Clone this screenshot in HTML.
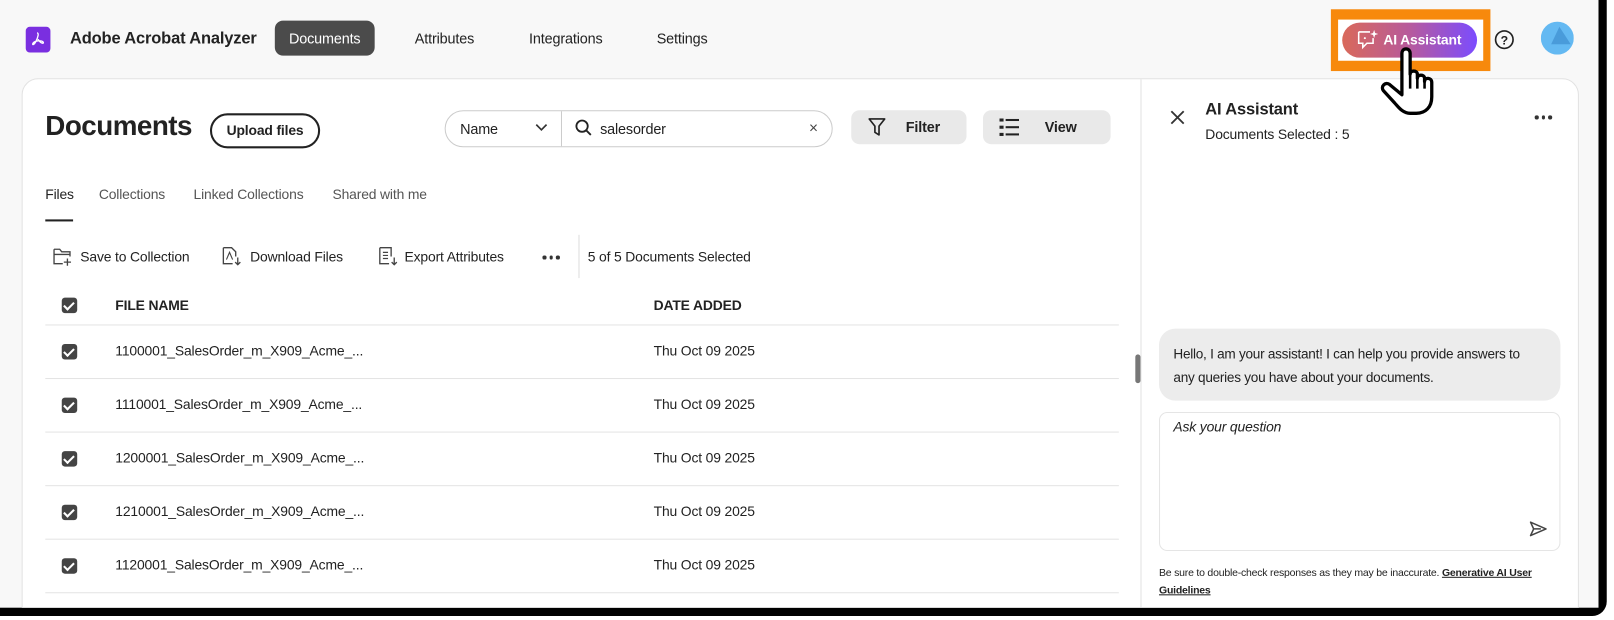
<!DOCTYPE html>
<html><head><meta charset="utf-8"><style>
*{margin:0;padding:0;box-sizing:border-box}
html,body{width:1614px;height:620px;overflow:hidden;background:#fff;font-family:"Liberation Sans",sans-serif;color:#222}
#wrap{position:absolute;left:0;top:0;width:1568px;height:602px;transform:scale(1.0293,1.03);transform-origin:0 0;letter-spacing:-0.15px}
.a{position:absolute;white-space:nowrap}
.frame{position:absolute;left:0;top:0;width:1561px;height:598px;background:#000;border-radius:0 0 14px 0}
.bg{position:absolute;left:0;top:0;width:1553px;height:590px;background:#f8f8f8;overflow:hidden}
.card{position:absolute;left:21px;top:76px;width:1513px;height:540px;background:#fff;border:1.5px solid #e2e2e2;border-radius:16px}
.nav{font-size:14px;color:#222}
.row{position:absolute;left:44px;width:1043px;height:1px;background:#e4e4e4}
.cb{position:absolute;left:60px;width:15px;height:15px;background:#444;border-radius:3px}
.cb:after{content:"";position:absolute;left:4px;top:2px;width:4px;height:8px;border:solid #fff;border-width:0 2px 2px 0;transform:rotate(45deg)}
.fn{font-size:13.5px;left:112px}
.dt{font-size:13.5px;left:635px}
.dots{position:absolute;display:flex;gap:3px}
.dots i{width:3.5px;height:3.5px;border-radius:50%;background:#333;display:block}
</style></head><body><div id="wrap">
<div class="frame"></div>
<div class="bg">
<div class="a" style="left:25px;top:26px;width:24px;height:25px;background:#7a2fe0;border-radius:4px"></div>
<svg class="a" style="left:29px;top:30px" width="16" height="17" viewBox="0 0 16 17"><path d="M7 2 C9 2 8 6 6 10 C4 14 2 14 3 12 C5 9 12 9 13 11 C14 13 10 12 8 8" stroke="#fff" stroke-width="1.3" fill="none"/></svg>
<div class="a" style="left:68px;top:29px;font-size:16px;font-weight:bold;color:#222">Adobe Acrobat Analyzer</div>
<div class="a" style="left:267px;top:20px;width:97px;height:34px;background:#4b4b4b;border-radius:8px;color:#fff;font-size:14px;line-height:34px;text-align:center">Documents</div>
<div class="a nav" style="left:403px;top:29px">Attributes</div>
<div class="a nav" style="left:514px;top:29px">Integrations</div>
<div class="a nav" style="left:638px;top:29px">Settings</div>
<div class="a" style="left:1293px;top:9px;width:155px;height:60px;background:#f7890c"></div>
<div class="a" style="left:1300px;top:19px;width:141px;height:40px;background:#fff"></div>
<div class="a" style="left:1304px;top:22px;width:131px;height:34px;border-radius:17px;background:linear-gradient(90deg,#d9695a,#b75a9c,#7b4cff);color:#fff;font-size:13.5px;font-weight:bold;line-height:34px;padding-left:40px">AI Assistant</div>
<svg class="a" style="left:1318px;top:28px" width="22" height="20" viewBox="0 0 22 20"><path d="M2 3 H13 M2 3 V14 H6 V18 L10 14 H16 V9" stroke="#fff" stroke-width="1.5" fill="none"/><path d="M17 1 L18 4 L21 5 L18 6 L17 9 L16 6 L13 5 L16 4Z" fill="#fff"/><circle cx="8" cy="9" r="1" fill="#fff"/></svg>
<svg class="a" style="left:1451px;top:28px" width="21" height="21"><circle cx="10.5" cy="10.5" r="8.5" stroke="#222" stroke-width="1.6" fill="none"/><text x="10.5" y="15" font-size="12" font-weight="bold" text-anchor="middle" fill="#222" font-family="Liberation Sans">?</text></svg>
<svg class="a" style="left:1497px;top:21px" width="32" height="32"><circle cx="16" cy="16" r="16" fill="#64b9f2"/><path d="M18 5 L29 22 L10 22Z" fill="#3d8fd0" opacity=".7"/></svg>

<div class="card"></div>
<div class="a" style="left:1108px;top:77px;width:1px;height:520px;background:#e2e2e2"></div>
<div class="a" style="left:44px;top:107px;font-size:27px;font-weight:bold;color:#222;letter-spacing:-0.5px">Documents</div>
<div class="a" style="left:204px;top:110px;width:107px;height:34px;border:2px solid #222;border-radius:17px;font-size:13.5px;font-weight:bold;text-align:center;line-height:30px">Upload files</div>
<div class="a" style="left:432px;top:107px;width:377px;height:36px;border:1.5px solid #ccc;border-radius:18px"></div>
<div class="a" style="left:545px;top:108px;width:1px;height:34px;background:#ccc"></div>
<div class="a" style="left:447px;top:117px;font-size:14px">Name</div>
<svg class="a" style="left:520px;top:119px" width="12" height="10"><path d="M1 2 L6 7 L11 2" stroke="#333" stroke-width="1.6" fill="none"/></svg>
<svg class="a" style="left:558px;top:115px" width="18" height="18"><circle cx="7.5" cy="7.5" r="5.5" stroke="#222" stroke-width="1.8" fill="none"/><path d="M11.5 11.5 L16 16" stroke="#222" stroke-width="1.8"/></svg>
<div class="a" style="left:583px;top:117px;font-size:14px">salesorder</div>
<div class="a" style="left:786px;top:116px;font-size:15px;color:#444">×</div>
<div class="a" style="left:827px;top:107px;width:112px;height:33px;background:#e9e9e9;border-radius:8px;font-size:14px;font-weight:bold;line-height:33px;padding-left:53px">Filter</div>
<svg class="a" style="left:843px;top:114px" width="18" height="19"><path d="M1.5 1.5 H16.5 L11 8.5 V17 L7 14.5 V8.5Z" stroke="#222" stroke-width="1.6" fill="none" stroke-linejoin="round"/></svg>
<div class="a" style="left:955px;top:107px;width:124px;height:33px;background:#e9e9e9;border-radius:8px;font-size:14px;font-weight:bold;line-height:33px;padding-left:60px">View</div>
<svg class="a" style="left:971px;top:115px" width="19" height="17"><g fill="#222"><rect x="0" y="0" width="4" height="3"/><rect x="0" y="7" width="4" height="3"/><rect x="0" y="14" width="4" height="3"/><rect x="6" y="0.5" width="13" height="2"/><rect x="6" y="7.5" width="13" height="2"/><rect x="6" y="14.5" width="13" height="2"/></g></svg>

<div class="a" style="left:44px;top:181px;font-size:13.5px;color:#222">Files</div>
<div class="a" style="left:96px;top:181px;font-size:13.5px;color:#555">Collections</div>
<div class="a" style="left:188px;top:181px;font-size:13.5px;color:#555">Linked Collections</div>
<div class="a" style="left:323px;top:181px;font-size:13.5px;color:#555">Shared with me</div>
<div class="a" style="left:44px;top:213px;width:27px;height:2px;background:#222"></div>

<svg class="a" style="left:51px;top:240px" width="20" height="19"><path d="M1.5 2 H7 L9 4.5 H17 V9 M1.5 2 V16 H10 M1.5 7 H17" stroke="#444" stroke-width="1.3" fill="none"/><path d="M14.5 11 V18 M11 14.5 H18" stroke="#444" stroke-width="1.3"/></svg>
<div class="a" style="left:78px;top:242px;font-size:13.5px">Save to Collection</div>
<svg class="a" style="left:215px;top:239px" width="20" height="20"><path d="M2 1.5 H10 L14 5.5 V10 M2 1.5 V17 H11" stroke="#444" stroke-width="1.3" fill="none"/><path d="M5 13 L8 6 L11 13" stroke="#444" stroke-width="1.1" fill="none"/><path d="M16 11 V18 M13.5 15.5 L16 18 L18.5 15.5" stroke="#444" stroke-width="1.3" fill="none"/></svg>
<div class="a" style="left:243px;top:242px;font-size:13.5px">Download Files</div>
<svg class="a" style="left:367px;top:239px" width="20" height="20"><path d="M2 1.5 H13 V10 M2 1.5 V17 H11" stroke="#444" stroke-width="1.3" fill="none"/><path d="M5 6 H10 M5 9 H10 M5 12 H10" stroke="#444" stroke-width="1.2"/><path d="M16 11 V18 M13.5 15.5 L16 18 L18.5 15.5" stroke="#444" stroke-width="1.3" fill="none"/></svg>
<div class="a" style="left:393px;top:242px;font-size:13.5px">Export Attributes</div>
<div class="dots" style="left:527px;top:248px"><i></i><i></i><i></i></div>
<div class="a" style="left:562px;top:228px;width:1px;height:42px;background:#ddd"></div>
<div class="a" style="left:571px;top:242px;font-size:13.5px">5 of 5 Documents Selected</div>

<div class="cb" style="top:289px"></div>
<div class="a" style="left:112px;top:289px;font-size:13.5px;font-weight:bold">FILE NAME</div>
<div class="a" style="left:635px;top:289px;font-size:13.5px;font-weight:bold">DATE ADDED</div>
<div class="row" style="top:315px"></div>

<div class="cb" style="top:334px"></div><div class="a fn" style="top:333px">1100001_SalesOrder_m_X909_Acme_...</div><div class="a dt" style="top:333px">Thu Oct 09 2025</div><div class="row" style="top:367px"></div>
<div class="cb" style="top:386px"></div><div class="a fn" style="top:385px">1110001_SalesOrder_m_X909_Acme_...</div><div class="a dt" style="top:385px">Thu Oct 09 2025</div><div class="row" style="top:419px"></div>
<div class="cb" style="top:438px"></div><div class="a fn" style="top:437px">1200001_SalesOrder_m_X909_Acme_...</div><div class="a dt" style="top:437px">Thu Oct 09 2025</div><div class="row" style="top:471px"></div>
<div class="cb" style="top:490px"></div><div class="a fn" style="top:489px">1210001_SalesOrder_m_X909_Acme_...</div><div class="a dt" style="top:489px">Thu Oct 09 2025</div><div class="row" style="top:523px"></div>
<div class="cb" style="top:542px"></div><div class="a fn" style="top:541px">1120001_SalesOrder_m_X909_Acme_...</div><div class="a dt" style="top:541px">Thu Oct 09 2025</div><div class="row" style="top:575px"></div>
<div class="a" style="left:1103px;top:344px;width:5px;height:28px;background:#777;border-radius:3px"></div>

<svg class="a" style="left:1137px;top:107px" width="14" height="14"><path d="M1 1 L13 13 M13 1 L1 13" stroke="#333" stroke-width="1.8"/></svg>
<div class="a" style="left:1171px;top:98px;font-size:16px;font-weight:bold">AI Assistant</div>
<div class="a" style="left:1171px;top:123px;font-size:13.5px">Documents Selected : 5</div>
<div class="dots" style="left:1491px;top:112px"><i></i><i></i><i></i></div>

<div class="a" style="left:1126px;top:319px;width:390px;height:70px;background:#ececec;border-radius:16px"></div>
<div class="a" style="left:1140px;top:332px;font-size:13.2px;line-height:23px;letter-spacing:-0.25px">Hello, I am your assistant! I can help you provide answers to<br>any queries you have about your documents.</div>
<div class="a" style="left:1126px;top:400px;width:390px;height:135px;border:1.5px solid #e5e5e5;border-radius:8px;background:#fff"></div>
<div class="a" style="left:1140px;top:407px;font-size:13.5px;font-style:italic">Ask your question</div>
<svg class="a" style="left:1485px;top:505px" width="19" height="17"><path d="M2 2 L17 8.5 L2 15 L5 8.5Z M5 8.5 H12" stroke="#444" stroke-width="1.5" fill="none" stroke-linejoin="round"/></svg>
<div class="a" style="left:1126px;top:548px;font-size:10.2px;line-height:17px;letter-spacing:-0.2px">Be sure to double-check responses as they may be inaccurate. <b style="text-decoration:underline">Generative AI User</b><br><b style="text-decoration:underline">Guidelines</b></div>

<svg class="a" style="left:1340px;top:44px" width="58" height="70" viewBox="0 0 58 70"><path d="M22 8 C22 2 30 2 30 8 V28 C30 24 37 24 37 28 V32 C37 28 44 28 44 32 V35 C44 31 51 31 51 36 V50 C51 60 45 66 36 66 H30 C24 66 20 62 15 56 L4 44 C1 40 6 35 10 38 L22 48Z" fill="#fff" stroke="#000" stroke-width="3.2" stroke-linejoin="round"/><path d="M30 28 V42 M37 32 V42 M44 35 V42" stroke="#000" stroke-width="2.5"/></svg>
</div>
</div></body></html>
